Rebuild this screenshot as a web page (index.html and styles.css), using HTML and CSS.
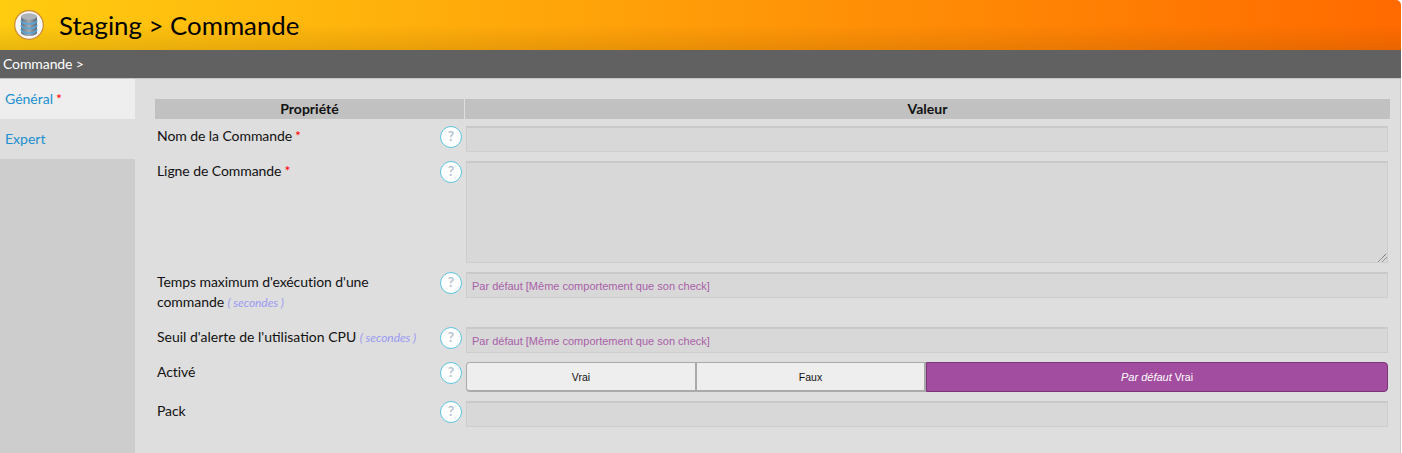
FILE: index.html
```html
<!DOCTYPE html>
<html lang="fr">
<head>
<meta charset="utf-8">
<title>Staging > Commande</title>
<link rel="stylesheet" href="styles.css">
</head>
<body>
<div class="app">
  <header class="topbar">
    <span class="logo">
      <svg width="30" height="30" viewBox="0 0 30 30">
        <defs>
          <linearGradient id="cyl" x1="0" x2="1" y1="0" y2="0">
            <stop offset="0" stop-color="#66737f"/>
            <stop offset=".5" stop-color="#a3abb2"/>
            <stop offset="1" stop-color="#5c6873"/>
          </linearGradient>
        </defs>
        <circle cx="15" cy="15" r="14.3" fill="#f6f6f6" stroke="#c98a35" stroke-width="1.2"/>
        <path d="M7 6.5v16c0 2 3.6 3.5 8 3.5s8-1.5 8-3.5v-16z" fill="url(#cyl)"/>
        <ellipse cx="15" cy="6.5" rx="8" ry="3.2" fill="#aeb3b8"/>
        <path d="M7 10.5c0 2 3.6 3.5 8 3.5s8-1.5 8-3.5M7 15c0 2 3.6 3.5 8 3.5s8-1.5 8-3.5M7 19.5c0 2 3.6 3.5 8 3.5s8-1.5 8-3.5" fill="none" stroke="#55a8dc" stroke-width="1.5"/>
      </svg>
    </span>
    <h1 class="title">Staging &gt; Commande</h1>
  </header>
  <div class="crumb">Commande &gt;</div>
  <div class="body">
    <nav class="side">
      <a class="tab tab-active">Général<span class="req">*</span></a>
      <a class="tab">Expert</a>
    </nav>
    <main class="main">
      <div class="heads">
        <div class="head head-prop">Propriété</div>
        <div class="head head-val">Valeur</div>
      </div>
      <div class="rows">
        <div class="row">
          <div class="label">Nom de la Commande<span class="req">*</span></div>
          <span class="help">?</span>
          <div class="field input"></div>
        </div>
        <div class="row">
          <div class="label">Ligne de Commande<span class="req">*</span></div>
          <span class="help">?</span>
          <div class="field input textarea">
            <svg class="grip" width="9" height="9" viewBox="0 0 9 9"><path d="M0.5 8.5L8.5 0.5M4.5 8.5L8.5 4.5" stroke="#555" stroke-width="1" stroke-dasharray="1 .6" fill="none"/></svg>
          </div>
        </div>
        <div class="row">
          <div class="label">Temps maximum d'exécution d'une commande <span class="unit">( secondes )</span></div>
          <span class="help">?</span>
          <div class="field input placeholder">Par défaut [Même comportement que son check]</div>
        </div>
        <div class="row">
          <div class="label label-wide">Seuil d'alerte de l'utilisation CPU <span class="unit">( secondes )</span></div>
          <span class="help">?</span>
          <div class="field input placeholder">Par défaut [Même comportement que son check]</div>
        </div>
        <div class="row">
          <div class="label">Activé</div>
          <span class="help">?</span>
          <div class="field toggle">
            <div class="opt opt-first">Vrai</div>
            <div class="opt">Faux</div>
            <div class="opt opt-on"><em class="opt-em">Par défaut</em>&nbsp;<span class="opt-small">Vrai</span></div>
          </div>
        </div>
        <div class="row">
          <div class="label">Pack</div>
          <span class="help">?</span>
          <div class="field input"></div>
        </div>
      </div>
    </main>
  </div>
</div>
</body>
</html>
```
FILE: styles.css
```css
* { box-sizing: border-box; }
html, body { margin: 0; padding: 0; height: 100%; background: #fff; }
body { font-family: Lato, "Liberation Sans", sans-serif; font-size: 14px; color: #111; overflow: hidden; }
.app { width: 1401px; height: 453px; display: flex; flex-direction: column; }
.topbar {
  height: 50px; display: flex; align-items: center; padding-left: 14px; gap: 15px;
  border-top-right-radius: 5px;
  background:
    linear-gradient(to bottom, rgba(0,0,0,0) 50%, rgba(110,70,0,.16) 100%),
    linear-gradient(to right, #ffcc10 0%, #ff6a00 100%);
}
.logo { display: flex; width: 30px; height: 30px; }
.title { margin: 0; font-size: 25.8px; font-weight: 400; color: #000; line-height: 50px; font-family: Lato, sans-serif; }
.crumb { height: 28px; background: #616161; color: #fff; line-height: 27px; padding-left: 3px; font-size: 14px; letter-spacing: -0.1px; }
.body { flex: 1; display: flex; border-top: 1px solid #c4c4c4; min-height: 0; }
.side { width: 135px; background: #cdcdcd; display: flex; flex-direction: column; }
.tab { display: block; height: 40px; line-height: 40px; padding-left: 5px; color: #2090d0; background: #dedede; font-size: 14px; }
.tab-active { background: #eee; }
.req { color: #f00; font-size: 14px; line-height: 1; margin-left: 3px; }
.main { flex: 1; background: #dedede; padding: 20px 10px 0 20px; border-right: 1px solid #c8c8c8; }
.heads { display: flex; gap: 1px; height: 20px; line-height: 20px; font-weight: 700; text-align: center; }
.head { background: #c1c1c1; }
.head-prop { width: 309px; }
.head-val { flex: 1; }
.rows { display: flex; flex-direction: column; gap: 9px; padding-top: 7px; }
.row { display: flex; align-items: flex-start; }
.label { width: 285px; padding: 0 4px 6px 2px; line-height: 20px; font-size: 14px; color: #111; letter-spacing: -0.07px; }
.label-wide { letter-spacing: 0; }
.unit { color: #9a9af2; font-style: italic; font-size: 12px; line-height: 1; letter-spacing: -0.07px; }
.help {
  width: 22px; height: 22px; margin-right: 4px; border-radius: 50%; background: #fff;
  border: 1.5px solid #5dc3e0; color: #b8c4d0; font-weight: 700; font-size: 14px;
  line-height: 18px; text-align: center; flex: none;
}
.field { width: 922px; flex: none; }
.input {
  height: 26px; background: #d8d8d8; border: 2px solid #cecece; border-top-color: #c9c9c9;
  border-width: 2px 1.5px 1.5px 1.5px;
}
.textarea { height: 102px; position: relative; }
.grip { position: absolute; right: 0; bottom: 0; }
.placeholder { color: #a860a8; font-family: "Liberation Sans", sans-serif; font-size: 11px; line-height: 25px; padding-left: 5px; }
.toggle { display: flex; height: 30px; font-family: "Liberation Sans", sans-serif; font-size: 10.5px; }
.opt {
  flex: 0 0 229px; display: flex; align-items: center; justify-content: center;
  background: #eee; border: 1px solid #aaa; border-width: 1px 2px 2px 0; color: #111;
}
.opt-first { flex-basis: 231px; border-left-width: 1px; border-radius: 4px 0 0 4px; }
.opt-on { flex: 1; background: #a24d9f; border: 1px solid #7a3678; border-radius: 0 4px 4px 0; color: #fff; }
.opt-em { font-style: italic; font-size: 11px; }
.opt-small { font-size: 10.5px; }
```
